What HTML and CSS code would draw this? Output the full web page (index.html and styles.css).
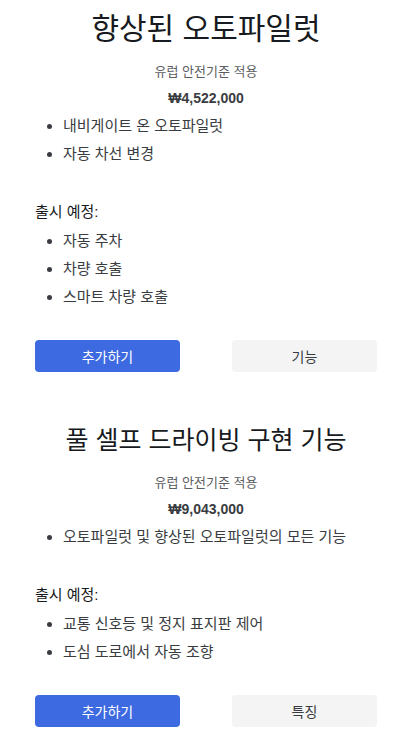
FILE: index.html
```html
<!DOCTYPE html>
<html lang="ko">
<head>
<meta charset="utf-8">
<title>오토파일럿</title>
<link rel="stylesheet" href="styles.css">
</head>
<body>
<main class="page">
  <section class="pkg pkg-first">
    <h1 class="pkg-title pkg-title-lg">향상된 오토파일럿</h1>
    <p class="pkg-sub">유럽 안전기준 적용</p>
    <p class="pkg-price">₩4,522,000</p>
    <ul class="feat">
      <li>내비게이트 온 오토파일럿</li>
      <li>자동 차선 변경</li>
    </ul>
    <p class="soon">출시 예정:</p>
    <ul class="feat feat-soon">
      <li>자동 주차</li>
      <li>차량 호출</li>
      <li>스마트 차량 호출</li>
    </ul>
    <div class="actions">
      <button class="btn btn-primary">추가하기</button>
      <button class="btn btn-secondary">기능</button>
    </div>
  </section>
  <section class="pkg pkg-second">
    <h1 class="pkg-title">풀 셀프 드라이빙 구현 기능</h1>
    <p class="pkg-sub">유럽 안전기준 적용</p>
    <p class="pkg-price">₩9,043,000</p>
    <ul class="feat">
      <li>오토파일럿 및 향상된 오토파일럿의 모든 기능</li>
    </ul>
    <p class="soon">출시 예정:</p>
    <ul class="feat feat-soon">
      <li>교통 신호등 및 정지 표지판 제어</li>
      <li>도심 도로에서 자동 조향</li>
    </ul>
    <div class="actions">
      <button class="btn btn-primary">추가하기</button>
      <button class="btn btn-secondary">특징</button>
    </div>
  </section>
</main>
</body>
</html>
```
FILE: styles.css
```css
* { box-sizing: border-box; }
html, body {
  margin: 0;
  padding: 0;
  background: #ffffff;
}
body {
  font-family: "Liberation Sans", "Noto Sans CJK KR", sans-serif;
  color: #393c41;
}
.page {
  width: 342px;
  margin-left: 35px;
  display: flex;
  flex-direction: column;
}
.pkg {
  display: flex;
  flex-direction: column;
}
.pkg-first { padding-top: 9px; }
.pkg-second { padding-top: 48px; }
.pkg-title {
  margin: 0;
  text-align: center;
  font-weight: 400;
  font-size: 25px;
  line-height: 40px;
  color: #171a20;
}
.pkg-title-lg {
  font-size: 30px;
}
.pkg-sub {
  margin: 13px 0 0;
  text-align: center;
  font-size: 13px;
  line-height: 20px;
  color: #5c5e62;
}
.pkg-price {
  margin: 6px 0 0;
  text-align: center;
  font-size: 14px;
  font-weight: 700;
  line-height: 20px;
  color: #393c41;
}
.feat {
  margin: 4px 0 0;
  padding-left: 28px;
  list-style: disc;
}
.feat li {
  font-size: 15px;
  line-height: 28px;
  color: #393c41;
}
.feat-soon { margin-top: 1px; }
.soon {
  margin: 30px 0 0;
  font-size: 15px;
  line-height: 28px;
  color: #171a20;
}
.actions {
  margin-top: 29px;
  display: flex;
  justify-content: space-between;
}
.btn {
  width: 145px;
  height: 32px;
  border: 0;
  border-radius: 4px;
  font-family: "Liberation Sans", "Noto Sans CJK KR", sans-serif;
  font-size: 14px;
  padding: 0;
}
.btn-primary {
  background: #3e6ae1;
  color: #ffffff;
}
.btn-secondary {
  background: #f4f4f4;
  color: #393c41;
}
```
